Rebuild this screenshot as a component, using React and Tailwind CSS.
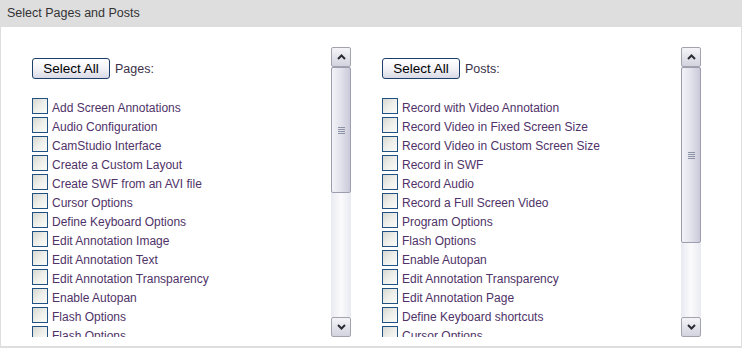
import React from "react";

const pages = [
  "Add Screen Annotations",
  "Audio Configuration",
  "CamStudio Interface",
  "Create a Custom Layout",
  "Create SWF from an AVI file",
  "Cursor Options",
  "Define Keyboard Options",
  "Edit Annotation Image",
  "Edit Annotation Text",
  "Edit Annotation Transparency",
  "Enable Autopan",
  "Flash Options",
  "Flash Options",
];

const posts = [
  "Record with Video Annotation",
  "Record Video in Fixed Screen Size",
  "Record Video in Custom Screen Size",
  "Record in SWF",
  "Record Audio",
  "Record a Full Screen Video",
  "Program Options",
  "Flash Options",
  "Enable Autopan",
  "Edit Annotation Transparency",
  "Edit Annotation Page",
  "Define Keyboard shortcuts",
  "Cursor Options",
];

function Chevron({ up }) {
  return (
    <svg width="9" height="6" viewBox="0 0 9 6">
      <path
        d={up ? "M1 5 L4.5 1.5 L8 5" : "M1 1 L4.5 4.5 L8 1"}
        fill="none"
        stroke="#2b2b33"
        strokeWidth="2"
      />
    </svg>
  );
}

function ScrollBar({ thumb }) {
  return (
    <div className="flex w-[20px] shrink-0 flex-col">
      <div className="flex h-[20px] items-center justify-center rounded-[2px] border border-[#a3a3ad] bg-gradient-to-b from-[#f4f4f8] to-[#d3d3df]">
        <Chevron up />
      </div>
      <div className="flex flex-1 flex-col bg-gradient-to-r from-[#e9e9f1] via-[#fbfbfd] to-[#e9e9f1]">
        <div
          className="flex shrink-0 flex-col items-center justify-center gap-[1px] rounded-[2px] border border-[#9d9db0] bg-gradient-to-r from-[#f2f2f7] via-[#e2e2ec] to-[#c9c9d9]"
          style={{ height: thumb }}
        >
          <div className="h-[1px] w-[7px] bg-[#8d93a6]" />
          <div className="h-[1px] w-[7px] bg-[#8d93a6]" />
          <div className="h-[1px] w-[7px] bg-[#8d93a6]" />
          <div className="h-[1px] w-[7px] bg-[#8d93a6]" />
        </div>
      </div>
      <div className="flex h-[20px] items-center justify-center rounded-[2px] border border-[#a3a3ad] bg-gradient-to-b from-[#f4f4f8] to-[#d3d3df]">
        <Chevron />
      </div>
    </div>
  );
}

function Column({ label, items, thumb }) {
  return (
    <div className="flex h-[290px] w-[319px]">
      <div className="w-[299px] overflow-hidden pt-[11px]">
        <div className="flex h-[21px] items-center">
          <button className="h-[21px] w-[78px] rounded-[3px] border border-[#1e3f6c] bg-gradient-to-b from-[#ffffff] via-[#f3f3f7] to-[#d9d9e6] pt-[1px] text-[13.5px] leading-none text-black">
            Select All
          </button>
          <span className="ml-[5px] pt-[2px] text-[12.5px] text-[#3b3148]">{label}</span>
        </div>
        <div className="mt-[19px] flex flex-col">
          {items.map((t, i) => (
            <div key={i} className="flex h-[19px] items-start">
              <div className="h-[16px] w-[16px] shrink-0 border border-[#1f5283] bg-gradient-to-br from-[#d8d8d2] via-[#eeeeea] to-[#fbfbf9]" />
              <span className="ml-[4px] whitespace-nowrap text-[12px] leading-[21px] text-[#4f3268]">
                {t}
              </span>
            </div>
          ))}
        </div>
      </div>
      <ScrollBar thumb={thumb} />
    </div>
  );
}

export default function App() {
  return (
    <div
      className="w-[742px] bg-white"
      style={{ fontFamily: '"Liberation Sans", Arial, sans-serif' }}
    >
      <div className="flex h-[27px] items-center bg-[#dedede] pl-[7px] text-[12.5px] text-[#333]">
        Select Pages and Posts
      </div>
      <div className="flex h-[321px] gap-[31px] border-x border-b-2 border-[#dedede] pl-[31px] pt-[20px]">
        <Column label="Pages:" items={pages} thumb={126} />
        <Column label="Posts:" items={posts} thumb={176} />
      </div>
    </div>
  );
}
